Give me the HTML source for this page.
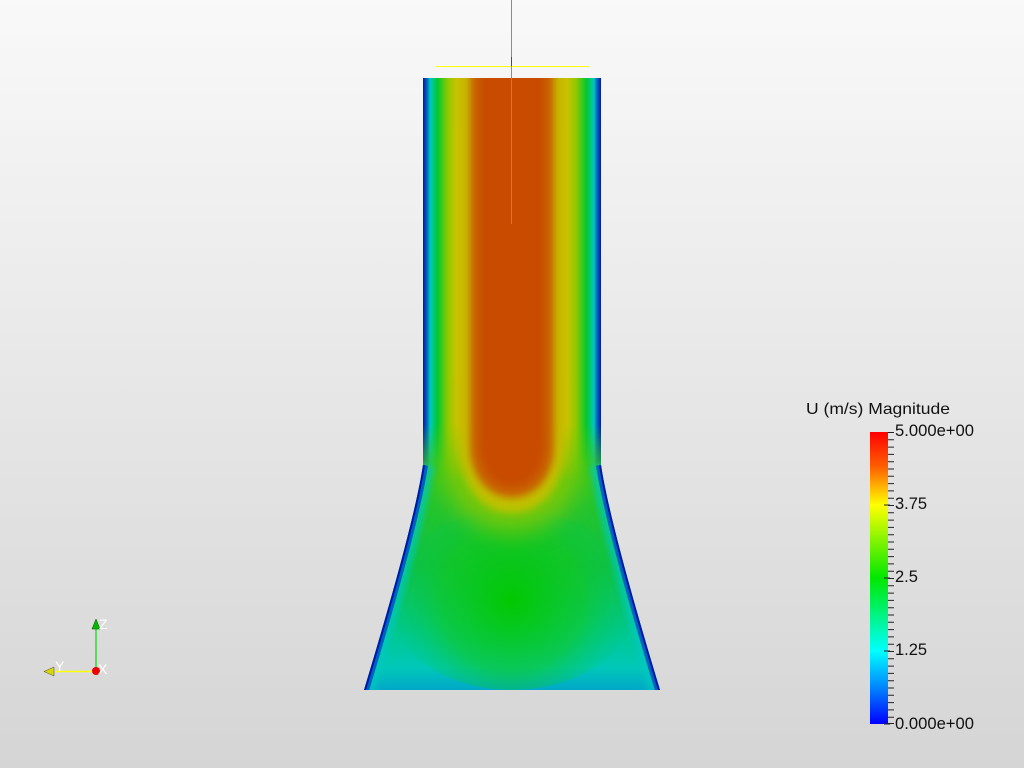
<!DOCTYPE html>
<html><head><meta charset="utf-8"><style>
html,body{margin:0;padding:0;width:1024px;height:768px;overflow:hidden}
body{background:linear-gradient(#f9f9f9,#d5d5d5)}
svg{display:block}
</style></head><body>
<svg width="1024" height="768" viewBox="0 0 1024 768" xmlns="http://www.w3.org/2000/svg" font-family="Liberation Sans, sans-serif">
<defs>
<linearGradient id="tube" x1="423" y1="0" x2="601" y2="0" gradientUnits="userSpaceOnUse">
<stop offset="0" stop-color="#0018a8"/><stop offset="0.025" stop-color="#0070c0"/><stop offset="0.04" stop-color="#00c8c0"/>
<stop offset="0.08" stop-color="#00c830"/><stop offset="0.14" stop-color="#90c800"/><stop offset="0.19" stop-color="#c8c400"/>
<stop offset="0.27" stop-color="#c8a000"/><stop offset="0.33" stop-color="#c86000"/><stop offset="0.4" stop-color="#c84c00"/>
<stop offset="0.6" stop-color="#c84c00"/><stop offset="0.67" stop-color="#c86000"/><stop offset="0.73" stop-color="#c8a000"/>
<stop offset="0.81" stop-color="#c8c400"/><stop offset="0.86" stop-color="#90c800"/><stop offset="0.92" stop-color="#00c830"/>
<stop offset="0.96" stop-color="#00c8c0"/><stop offset="0.975" stop-color="#0070c0"/><stop offset="1" stop-color="#0018a8"/>
</linearGradient>
<linearGradient id="flare" x1="0" y1="465" x2="0" y2="690" gradientUnits="userSpaceOnUse">
<stop offset="0" stop-color="#30c820"/><stop offset="0.45" stop-color="#10c040"/><stop offset="0.75" stop-color="#00c890"/><stop offset="0.9" stop-color="#00c8b8"/><stop offset="1" stop-color="#00a8c8"/>
</linearGradient>
<linearGradient id="fade" x1="0" y1="78" x2="0" y2="480" gradientUnits="userSpaceOnUse">
<stop offset="0.86" stop-color="#fff"/><stop offset="1" stop-color="#000"/>
</linearGradient>
<mask id="tm"><rect x="400" y="70" width="230" height="420" fill="url(#fade)"/></mask>
<radialGradient id="glow" cx="512" cy="600" r="120" gradientUnits="userSpaceOnUse">
<stop offset="0" stop-color="#00c800"/><stop offset="0.6" stop-color="#10c820" stop-opacity="0.6"/><stop offset="1" stop-color="#00c860" stop-opacity="0"/>
</radialGradient>
<filter id="b4" x="-50%" y="-50%" width="200%" height="200%"><feGaussianBlur stdDeviation="4"/></filter>
<filter id="b10" x="-50%" y="-50%" width="200%" height="200%"><feGaussianBlur stdDeviation="12"/></filter>
<filter id="b2" x="-50%" y="-50%" width="200%" height="200%"><feGaussianBlur stdDeviation="3"/></filter>
<linearGradient id="cb" x1="0" y1="432" x2="0" y2="724" gradientUnits="userSpaceOnUse">
<stop offset="0" stop-color="#ff0000"/><stop offset="0.12" stop-color="#ff6000"/><stop offset="0.25" stop-color="#ffff00"/><stop offset="0.5" stop-color="#00e800"/><stop offset="0.75" stop-color="#00ffff"/><stop offset="0.88" stop-color="#0080ff"/><stop offset="1" stop-color="#0000ff"/>
</linearGradient>
<clipPath id="shape"><path d="M423,78 H601 V465 Q610,525 660,690 H364 Q414,525 423,465 Z"/></clipPath>
</defs>
<g clip-path="url(#shape)">
<rect x="360" y="380" width="310" height="320" fill="url(#flare)"/>
<rect x="360" y="380" width="310" height="90" fill="#30c820"/>
<ellipse cx="512" cy="600" rx="125" ry="90" fill="url(#glow)"/>
<path d="M440,380 V450 C440,560 584,560 584,450 V380 Z" fill="#90c800" opacity="0.8" filter="url(#b10)"/>
<rect x="423" y="78" width="178" height="410" fill="url(#tube)" mask="url(#tm)"/>
<path d="M460,60 V445 C460,535 564,535 564,445 V60 Z" fill="#c8c000" filter="url(#b4)" opacity="0.9"/>
<path d="M470,60 V445 C470,515 554,515 554,445 V60 Z" fill="#c86000" filter="url(#b4)"/>
<path d="M480,60 V445 C480,500 544,500 544,445 V60 Z" fill="#c84c00" filter="url(#b4)"/>
<path d="M423,465 Q414,525 364,690" stroke="#00c8c0" stroke-width="22" fill="none" opacity="0.7" filter="url(#b2)"/>
<path d="M423,465 Q414,525 364,690" stroke="#0060c0" stroke-width="10" fill="none"/>
<path d="M423,465 Q414,525 364,690" stroke="#0018a8" stroke-width="4" fill="none"/>
<path d="M601,465 Q610,525 660,690" stroke="#00c8c0" stroke-width="22" fill="none" opacity="0.7" filter="url(#b2)"/>
<path d="M601,465 Q610,525 660,690" stroke="#0060c0" stroke-width="10" fill="none"/>
<path d="M601,465 Q610,525 660,690" stroke="#0018a8" stroke-width="4" fill="none"/>
</g>
<g shape-rendering="crispEdges">
<rect x="436" y="66" width="153" height="1" fill="#ffff00"/>
<rect x="511" y="0" width="1" height="224" fill="#00ee00"/>
<rect x="511" y="57" width="1" height="9" fill="#ff0000"/>
</g>
<line x1="96" y1="671" x2="96" y2="628" stroke="#00dd00" stroke-width="1.2"/>
<path d="M92,629 L96,619 L100,629 Z" fill="#00bb00" stroke="#004400" stroke-width="0.5"/>
<line x1="96" y1="671.5" x2="55" y2="671.5" stroke="#ffff00" stroke-width="1.5"/>
<path d="M54,667 L44,671.5 L54,676 Z" fill="#d8d800" stroke="#444" stroke-width="0.5"/>
<circle cx="96" cy="671" r="4" fill="#ee0000"/>
<text x="99" y="629" font-size="14" fill="#fff">Z</text>
<text x="55" y="671" font-size="14" fill="#fff">Y</text>
<text x="98" y="674" font-size="14" fill="#fff">X</text>
<text x="806" y="414" font-size="16" fill="#111" textLength="144" lengthAdjust="spacingAndGlyphs">U (m/s) Magnitude</text>
<rect x="870" y="432" width="18" height="292" fill="url(#cb)"/>
<g stroke="#222" stroke-width="1">
<path d="M888,432.5h6M888,439.8h6M888,447.1h6M888,454.4h6M888,461.7h6M888,469h6M888,476.3h6M888,483.6h6M888,490.9h6M888,498.2h6M888,505.5h6M888,512.8h6M888,520.1h6M888,527.4h6M888,534.7h6M888,542h6M888,549.3h6M888,556.6h6M888,563.9h6M888,571.2h6M888,578.5h6M888,585.8h6M888,593.1h6M888,600.4h6M888,607.7h6M888,615h6M888,622.3h6M888,629.6h6M888,636.9h6M888,644.2h6M888,651.5h6M888,658.8h6M888,666.1h6M888,673.4h6M888,680.7h6M888,688h6M888,695.3h6M888,702.6h6M888,709.9h6M888,717.2h6M888,723.5h6"/>
<path d="M884,505h6M884,578h6M884,651h6M884,724h6"/>
</g>
<g font-size="16.5" fill="#111">
<text x="895" y="436" textLength="79" lengthAdjust="spacingAndGlyphs">5.000e+00</text>
<text x="895" y="509">3.75</text>
<text x="895" y="582">2.5</text>
<text x="895" y="655">1.25</text>
<text x="895" y="729" textLength="79" lengthAdjust="spacingAndGlyphs">0.000e+00</text>
</g>
</svg>
</body></html>
